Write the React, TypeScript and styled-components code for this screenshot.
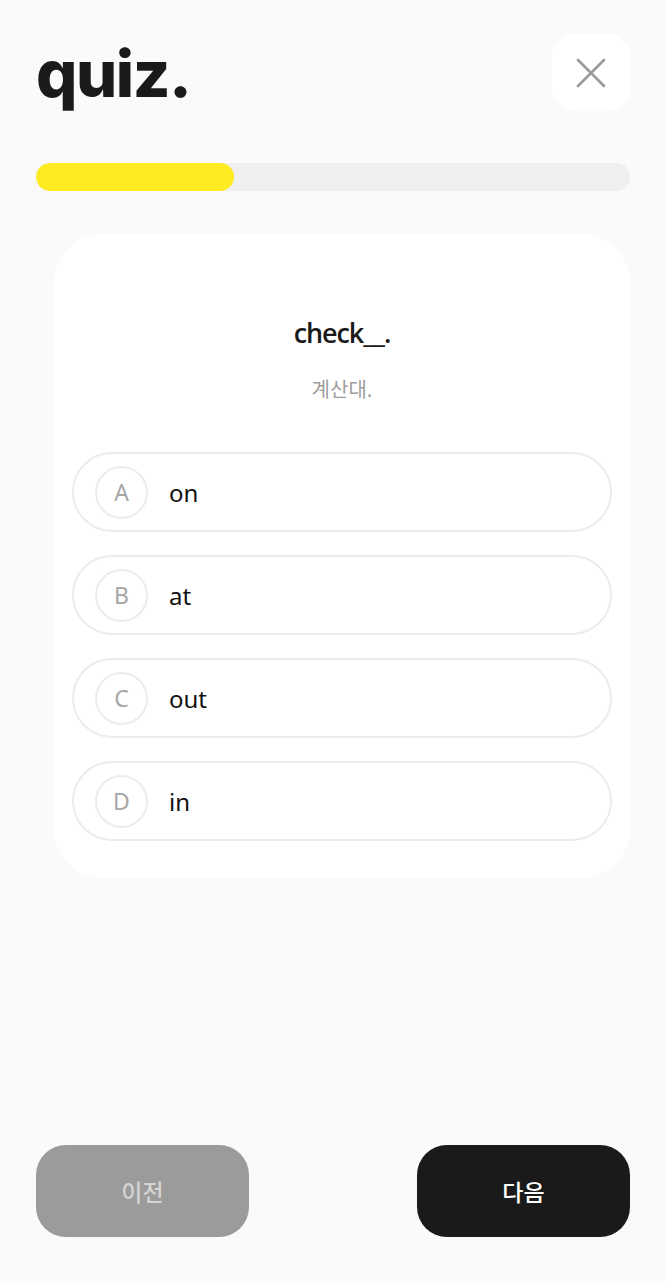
import React from "react";
import styled, { createGlobalStyle } from "styled-components";

const Global = createGlobalStyle`
  html, body { margin: 0; padding: 0; background: #fafafa; }
  body { font-family: "Noto Sans", "Noto Sans CJK KR", sans-serif; }
  * { box-sizing: border-box; }
`;

const Page = styled.div`
  min-height: 100vh;
  display: flex;
  flex-direction: column;
  padding: 34px 36px 44px 36px;
`;

const Header = styled.header`
  display: flex;
  justify-content: space-between;
  align-items: flex-start;
`;

const Logo = styled.h1`
  margin: 3px 0 0 0;
  font-family: Inter, "Noto Sans", sans-serif;
  font-weight: 800;
  font-size: 65px;
  line-height: 74px;
  letter-spacing: -1.5px;
  color: #1a1a1a;
`;

const CloseButton = styled.button`
  width: 78px;
  height: 77px;
  border: none;
  border-radius: 22px;
  background: #ffffff;
  display: flex;
  align-items: center;
  justify-content: center;
  padding: 0;
  cursor: pointer;
`;

const Track = styled.div`
  margin-top: 52px;
  height: 28px;
  border-radius: 14px;
  background: #efefef;
  overflow: hidden;
`;

const Fill = styled.div`
  height: 100%;
  border-radius: 14px;
  background: #ffeb22;
`;

const Card = styled.section`
  margin: 43px 0 0 18px;
  background: #ffffff;
  border-radius: 48px;
  padding: 80px 18px 37px 18px;
  display: flex;
  flex-direction: column;
`;

const Question = styled.h2`
  margin: 0;
  text-align: center;
  font-family: "Open Sans", "Noto Sans", sans-serif;
  font-weight: 600;
  font-size: 27px;
  line-height: 38px;
  letter-spacing: -1.1px;
  color: #1a1a1a;
`;

const Meaning = styled.p`
  margin: 23px 0 0 0;
  text-align: center;
  font-family: "Noto Sans CJK KR", sans-serif;
  font-size: 20px;
  line-height: 28px;
  color: #9e9e9e;
`;

const Options = styled.div`
  margin-top: 49px;
  display: flex;
  flex-direction: column;
  gap: 23px;
`;

const Option = styled.button`
  height: 80px;
  border: 2px solid #ececec;
  border-radius: 40px;
  background: #ffffff;
  display: flex;
  align-items: center;
  gap: 21px;
  padding: 0 0 0 21px;
  cursor: pointer;
  text-align: left;
`;

const Badge = styled.span`
  width: 53px;
  height: 53px;
  border-radius: 50%;
  border: 2px solid #ececec;
  display: flex;
  align-items: center;
  justify-content: center;
  font-family: "Noto Sans", sans-serif;
  font-size: 23px;
  color: #a6a6a6;
`;

const Answer = styled.span`
  font-family: "Noto Sans", sans-serif;
  font-size: 24px;
  color: #111111;
`;

const Spacer = styled.div`
  flex: 1;
`;

const Footer = styled.footer`
  display: flex;
  justify-content: space-between;
`;

const NavButton = styled.button<{ $primary?: boolean }>`
  width: 213px;
  height: 92px;
  border: none;
  border-radius: 30px;
  background: ${(p) => (p.$primary ? "#1a1a1a" : "#9b9b9b")};
  color: ${(p) => (p.$primary ? "#ffffff" : "#d4d4d4")};
  font-family: "Noto Sans CJK KR", sans-serif;
  font-size: 23px;
  font-weight: 500;
  cursor: pointer;
`;

const options = [
  { key: "A", text: "on" },
  { key: "B", text: "at" },
  { key: "C", text: "out" },
  { key: "D", text: "in" },
];

export default function App() {
  const progress = 1 / 3;
  return (
    <>
      <Global />
      <Page>
        <Header>
          <Logo>quiz.</Logo>
          <CloseButton aria-label="close">
            <svg width="30" height="30" viewBox="0 0 30 30" fill="none">
              <path d="M2 2L28 28M28 2L2 28" stroke="#9a9a9a" strokeWidth="2.6" strokeLinecap="round" />
            </svg>
          </CloseButton>
        </Header>
        <Track>
          <Fill style={{ width: `${progress * 100}%` }} />
        </Track>
        <Card>
          <Question>check__.</Question>
          <Meaning>계산대.</Meaning>
          <Options>
            {options.map((o) => (
              <Option key={o.key}>
                <Badge>{o.key}</Badge>
                <Answer>{o.text}</Answer>
              </Option>
            ))}
          </Options>
        </Card>
        <Spacer />
        <Footer>
          <NavButton>이전</NavButton>
          <NavButton $primary>다음</NavButton>
        </Footer>
      </Page>
    </>
  );
}
